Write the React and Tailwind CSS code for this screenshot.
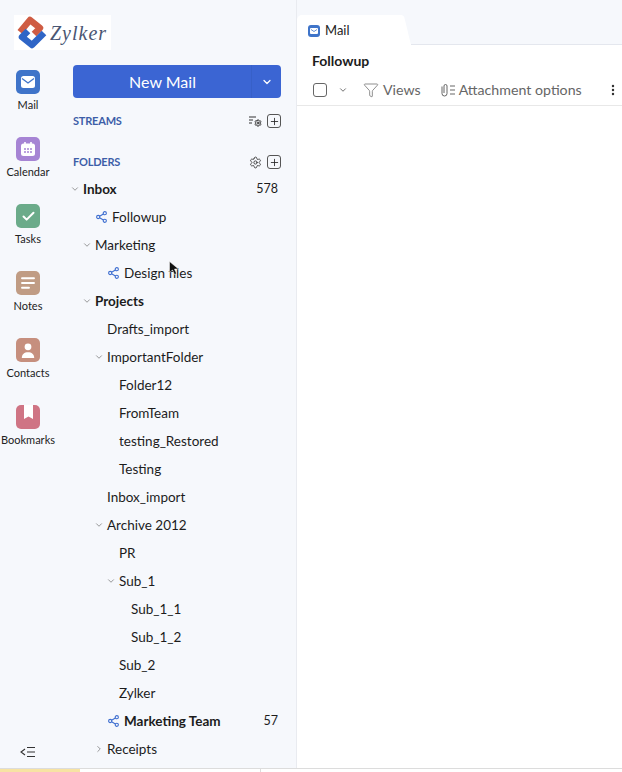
import { ChevronDown, ChevronRight, Check, Plus, Settings, Filter, EllipsisVertical } from 'lucide-react';

const railItems = [
  { label: 'Mail', bg: 'bg-[#3f74c9]', icon: 'mail' },
  { label: 'Calendar', bg: 'bg-[#a684d4]', icon: 'calendar' },
  { label: 'Tasks', bg: 'bg-[#6bab8a]', icon: 'tasks' },
  { label: 'Notes', bg: 'bg-[#c09c84]', icon: 'notes' },
  { label: 'Contacts', bg: 'bg-[#c68f7e]', icon: 'contacts' },
  { label: 'Bookmarks', bg: 'bg-[#cf7484]', icon: 'bookmarks' },
];

// indent = left offset of the folder name inside the tree column
const folders = [
  { name: 'Inbox', indent: 10, bold: true, arrow: 'down', count: '578' },
  { name: 'Followup', indent: 39, shared: true },
  { name: 'Marketing', indent: 22, arrow: 'down' },
  { name: 'Design files', indent: 51, shared: true },
  { name: 'Projects', indent: 22, bold: true, arrow: 'down' },
  { name: 'Drafts_import', indent: 34 },
  { name: 'ImportantFolder', indent: 34, arrow: 'down' },
  { name: 'Folder12', indent: 46 },
  { name: 'FromTeam', indent: 46 },
  { name: 'testing_Restored', indent: 46 },
  { name: 'Testing', indent: 46 },
  { name: 'Inbox_import', indent: 34 },
  { name: 'Archive 2012', indent: 34, arrow: 'down' },
  { name: 'PR', indent: 46 },
  { name: 'Sub_1', indent: 46, arrow: 'down' },
  { name: 'Sub_1_1', indent: 58 },
  { name: 'Sub_1_2', indent: 58 },
  { name: 'Sub_2', indent: 46 },
  { name: 'Zylker', indent: 46 },
  { name: 'Marketing Team', indent: 51, bold: true, shared: true, count: '57' },
  { name: 'Receipts', indent: 34, arrow: 'right' },
];

function RailGlyph({ icon }) {
  if (icon === 'mail') {
    return (
      <svg width="14" height="12" viewBox="0 0 14 12">
        <rect width="14" height="12" rx="2.500" fill="#fff" />
        <path d="M1 2.500 7 7l6-4.500" fill="none" stroke="#3f74c9" strokeWidth="1.300" />
      </svg>
    );
  }
  if (icon === 'calendar') {
    return (
      <svg width="14" height="14" viewBox="0 0 14 14">
        <rect y="1.500" width="14" height="12.500" rx="2.500" fill="#fff" />
        <path d="M4 0v3M10 0v3" stroke="#fff" strokeWidth="1.600" />
        <path d="M3 7h2M6 7h2M9 7h2M3 10h2M6 10h2M9 10h2" stroke="#a684d4" strokeWidth="1.400" />
      </svg>
    );
  }
  if (icon === 'tasks') return <Check size={15} color="#fff" strokeWidth={3.2} />;
  if (icon === 'notes') {
    return (
      <svg width="14" height="12" viewBox="0 0 14 12">
        <path d="M1 1.200h12M1 6h12M1 10.800h7" stroke="#fff" strokeWidth="1.900" strokeLinecap="round" />
      </svg>
    );
  }
  if (icon === 'contacts') {
    return (
      <svg width="14" height="15" viewBox="0 0 14 15">
        <circle cx="7" cy="3.800" r="3.400" fill="#fff" />
        <path d="M0.800 15c0-4 2.600-5.800 6.200-5.800s6.200 1.800 6.200 5.800z" fill="#fff" />
      </svg>
    );
  }
  return (
    <svg width="9" height="14" viewBox="0 0 9 14" className="mb-[10px]">
      <path d="M0 0h9v14L4.500 11.500 0 14z" fill="#fff" />
    </svg>
  );
}

function ShareIcon() {
  return (
    <svg width="11" height="12" viewBox="0 0 11 12" fill="none" stroke="#3f6fd0" strokeWidth="1.100">
      <circle cx="2.200" cy="6" r="1.600" />
      <circle cx="8.800" cy="2.200" r="1.600" />
      <circle cx="8.800" cy="9.800" r="1.600" />
      <path d="M3.600 5.200 7.400 3M3.600 6.800 7.400 9" />
    </svg>
  );
}

function SquarePlus() {
  return (
    <span className="flex h-[14px] w-[14px] items-center justify-center rounded-[3px] border-[1.5px] border-[#555]">
      <Plus size={11} color="#222" strokeWidth={1.8} />
    </span>
  );
}

function FolderRow({ folder }) {
  return (
    <div className="relative flex h-7 shrink-0 items-center pr-[3px] text-[13.5px] text-[#1c1c1c]" style={{ paddingLeft: folder.indent }}>
      {folder.arrow === 'down' && (
        <ChevronDown size={10} color="#666" strokeWidth={1.6} className="absolute top-[9px]" style={{ left: folder.indent - 13 }} />
      )}
      {folder.arrow === 'right' && (
        <ChevronRight size={10} color="#666" strokeWidth={1.6} className="absolute top-[9px]" style={{ left: folder.indent - 13 }} />
      )}
      {folder.shared && (
        <span className="absolute top-[8px]" style={{ left: folder.indent - 16 }}>
          <ShareIcon />
        </span>
      )}
      <span className={folder.bold ? 'font-bold' : ''}>{folder.name}</span>
      {folder.count && <span className="ml-auto mt-[1px] text-[12.5px]">{folder.count}</span>}
    </div>
  );
}

export default function App() {
  return (
    <div className="relative flex h-[772px] w-[622px] flex-col overflow-hidden bg-white font-['Lato','Noto_Sans',sans-serif]">
      <div className="flex min-h-0 flex-1">
        {/* Sidebar */}
        <aside className="flex w-[297px] shrink-0 flex-col border-r border-[#e9ebf0] bg-[#f6f8fc]">
          <div className="ml-[14px] mt-[15px] flex h-[35px] w-[97px] items-center gap-[3px] bg-white pl-[3px]">
            <svg width="30" height="33" viewBox="0 0 30 33" fill="none" strokeWidth="6.500" strokeLinejoin="round">
              <path d="M3 16 13 4l10 8-6 6" stroke="#cf5c43" />
              <path d="M27 17 15 29 5 21l6-6" stroke="#2f65c6" />
            </svg>
            <span className="font-['Liberation_Serif',serif] text-[20px] italic leading-none tracking-[1px] text-[#4a5673]">Zylker</span>
          </div>

          <div className="flex min-h-0 flex-1 pt-[15px]">
            {/* App rail */}
            <nav className="relative flex w-[56px] shrink-0 flex-col items-center pt-[5px]">
              {railItems.map((item) => (
                <div key={item.label} className="flex h-[67px] w-full shrink-0 flex-col items-center">
                  <div className={`flex h-6 w-6 items-center justify-center rounded-[5px] ${item.bg}`}>
                    <RailGlyph icon={item.icon} />
                  </div>
                  <span className="mt-[4px] whitespace-nowrap text-[11px] leading-[14px] text-[#222]">{item.label}</span>
                </div>
              ))}
              <svg width="16" height="12" viewBox="0 0 16 12" fill="none" stroke="#333" strokeWidth="1.100" className="mt-auto mb-[10px]">
                <path d="M5 3 1 6l4 3M7 1.500h8M7 6h8M7 10.500h8" />
              </svg>
            </nav>

            {/* Folder column */}
            <div className="flex min-w-0 flex-1 flex-col pl-[17px] pr-[15px]">
              <div className="flex h-[33px] shrink-0 overflow-hidden rounded-[4px] bg-[#3b65d3] text-white">
                <div className="flex flex-1 items-center justify-center border-r border-[#3760c8] pl-[1px] text-[16px]">New Mail</div>
                <div className="flex w-[29px] items-center justify-center">
                  <ChevronDown size={12} strokeWidth={2.5} />
                </div>
              </div>

              <div className="mt-[15px] flex h-[16px] shrink-0 items-center justify-between">
                <span className="text-[11px] font-bold tracking-[-0.2px] text-[#3d5ea8]">STREAMS</span>
                <div className="flex items-center gap-[5px]">
                  <span className="relative block h-[11px] w-[13px]">
                    <svg width="8" height="9" viewBox="0 0 8 9" fill="none" stroke="#333" strokeWidth="1.200" className="absolute left-0 top-0">
                      <path d="M0 1h7M0 4h4M0 7h3" />
                    </svg>
                    <Settings size={8} color="#333" strokeWidth={3} className="absolute bottom-0 right-0" />
                  </span>
                  <SquarePlus />
                </div>
              </div>

              <div className="mt-[25px] flex h-[16px] shrink-0 items-center justify-between">
                <span className="text-[11px] font-bold tracking-[-0.2px] text-[#3d5ea8]">FOLDERS</span>
                <div className="flex items-center gap-[5px]">
                  <Settings size={13} color="#333" strokeWidth={1.6} />
                  <SquarePlus />
                </div>
              </div>

              <div className="mt-[5px] flex flex-col">
                {folders.map((folder) => (
                  <FolderRow key={folder.name} folder={folder} />
                ))}
              </div>
            </div>
          </div>
        </aside>

        {/* Mail pane */}
        <main className="flex min-w-0 flex-1 flex-col bg-white">
          <div className="flex h-[45px] shrink-0 items-end bg-[#f6f8fc]">
            <div className="flex h-[30px] w-[114px] items-center gap-[5px] rounded-tl-[5px] bg-white pl-[11px] pt-[1px] text-[13px] text-[#222] [clip-path:polygon(0_0,92%_0,94%_6%,100%_100%,0_100%)]">
              <span className="flex h-[12px] w-[12px] items-center justify-center rounded-[3px] bg-[#3f74c9]">
                <svg width="8" height="6" viewBox="0 0 8 6">
                  <rect width="8" height="6" rx="1" fill="#fff" />
                  <path d="M1 1.500 4 3.500 7 1.500" fill="none" stroke="#3f74c9" strokeWidth="0.800" />
                </svg>
              </span>
              Mail
            </div>
            <div className="h-px flex-1 bg-[#e4e7ee]" />
          </div>

          <div className="flex h-[30px] shrink-0 items-center pl-[15px] text-[14px] font-bold text-[#1c1c1c]">Followup</div>

          <div className="flex h-[31px] shrink-0 items-center border-b border-[#e8e8e8] pl-[16px] text-[14.2px] text-[#666]">
            <span className="h-[14px] w-[14px] rounded-[3px] border-[1.5px] border-[#666]" />
            <ChevronDown size={10} color="#555" strokeWidth={2} className="ml-[11px]" />
            <Filter size={16} color="#666" strokeWidth={1.1} className="ml-[15px]" />
            <span className="ml-[4px]">Views</span>
            <svg width="16" height="15" viewBox="0 0 16 15" fill="none" stroke="#666" strokeWidth="1" className="ml-[19px]">
              <path d="M2 3.500v7a2.500 2.500 0 0 0 5 0V3a1.500 1.500 0 0 0-3 0v7M10 3h5M10 7h5M10 11h5" />
            </svg>
            <span className="ml-[3px]">Attachment options</span>
            <EllipsisVertical size={14} color="#333" strokeWidth={2.2} className="ml-auto mr-[2px]" />
          </div>
        </main>
      </div>

      {/* Edge of whatever sits below the window */}
      <div className="flex h-[4px] shrink-0 border-t border-[#dcdcdc] bg-white">
        <div className="w-[80px] bg-[#f7e3a3]" />
        <div className="ml-[180px] w-px bg-[#dcdcdc]" />
      </div>

      {/* Mouse pointer */}
      <svg width="10" height="15" viewBox="0 0 10 15" className="absolute left-[169px] top-[261px]">
        <path d="M0.500 0.500v11l3-2.500 2 4.500 2-1-2-4.500h4z" fill="#111" stroke="#fff" strokeWidth="0.500" />
      </svg>
    </div>
  );
}
